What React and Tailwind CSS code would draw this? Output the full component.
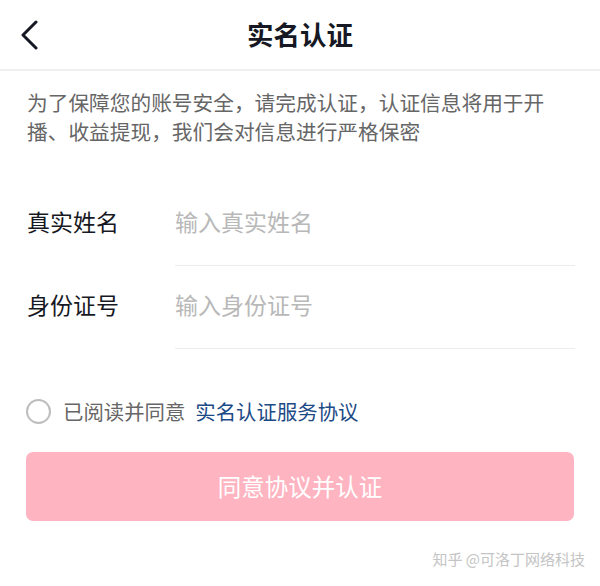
import React, { useState } from "react";

const FONT = { fontFamily: '"Noto Sans CJK SC", "Noto Sans", sans-serif' };

function BackIcon() {
  return (
    <svg width="18" height="30" viewBox="0 0 18 30" fill="none">
      <polyline
        points="16,2 3,15 16,28"
        stroke="#161823"
        strokeWidth="3"
        strokeLinecap="round"
        strokeLinejoin="round"
      />
    </svg>
  );
}

function FormRow({ label, placeholder }) {
  return (
    <div className="flex h-[83px]">
      <div className="w-[175px] pl-[27px] pb-[6px] flex items-center text-[23px] text-[#161823]">
        {label}
      </div>
      <div className="flex-1 mr-[25px] pb-[6px] border-b border-[#ececec] flex items-center">
        <input
          className="w-full outline-none text-[23px] text-[#161823] placeholder:text-[#b8b8b8] bg-transparent"
          style={FONT}
          placeholder={placeholder}
        />
      </div>
    </div>
  );
}

export default function App() {
  const [agreed, setAgreed] = useState(false);

  return (
    <div className="w-[600px] h-[586px] bg-white overflow-hidden" style={FONT}>
      <div className="h-[71px] grid grid-cols-[1fr_auto_1fr] items-center border-b-2 border-[#efefef]">
        <div className="pl-[20px] flex items-center">
          <BackIcon />
        </div>
        <div className="text-[26.5px] font-bold text-[#161823] leading-none">实名认证</div>
        <div />
      </div>

      <p className="w-[560px] pl-[27px] pt-[17px] text-[20.7px] leading-[29px] text-[#666666]">
        为了保障您的账号安全，请完成认证，认证信息将用于开播、收益提现，我们会对信息进行严格保密
      </p>

      <div className="mt-[37px]">
        <FormRow label="真实姓名" placeholder="输入真实姓名" />
        <FormRow label="身份证号" placeholder="输入身份证号" />
      </div>

      <div className="mt-[50px] pl-[26px] flex items-center h-[24px]">
        <button
          onClick={() => setAgreed(!agreed)}
          className="w-[25px] h-[25px] rounded-full border-2 border-[#bdbdbd] shrink-0"
        />
        <span className="ml-[12px] text-[20.4px] text-[#666666]">已阅读并同意</span>
        <span className="ml-[10px] text-[20.4px] text-[#1c4a86]">实名认证服务协议</span>
      </div>

      <button
        className="mt-[29px] mx-[26px] w-[548px] h-[69px] rounded-[7px] bg-[#ffb4c1] text-white text-[23.5px] flex items-center justify-center"
        style={FONT}
      >
        同意协议并认证
      </button>

      <div className="mt-[28px] pr-[15px] flex justify-end text-[15px] leading-[20px] text-[#c4c4c4]">
        知乎 @可洛丁网络科技
      </div>
    </div>
  );
}
